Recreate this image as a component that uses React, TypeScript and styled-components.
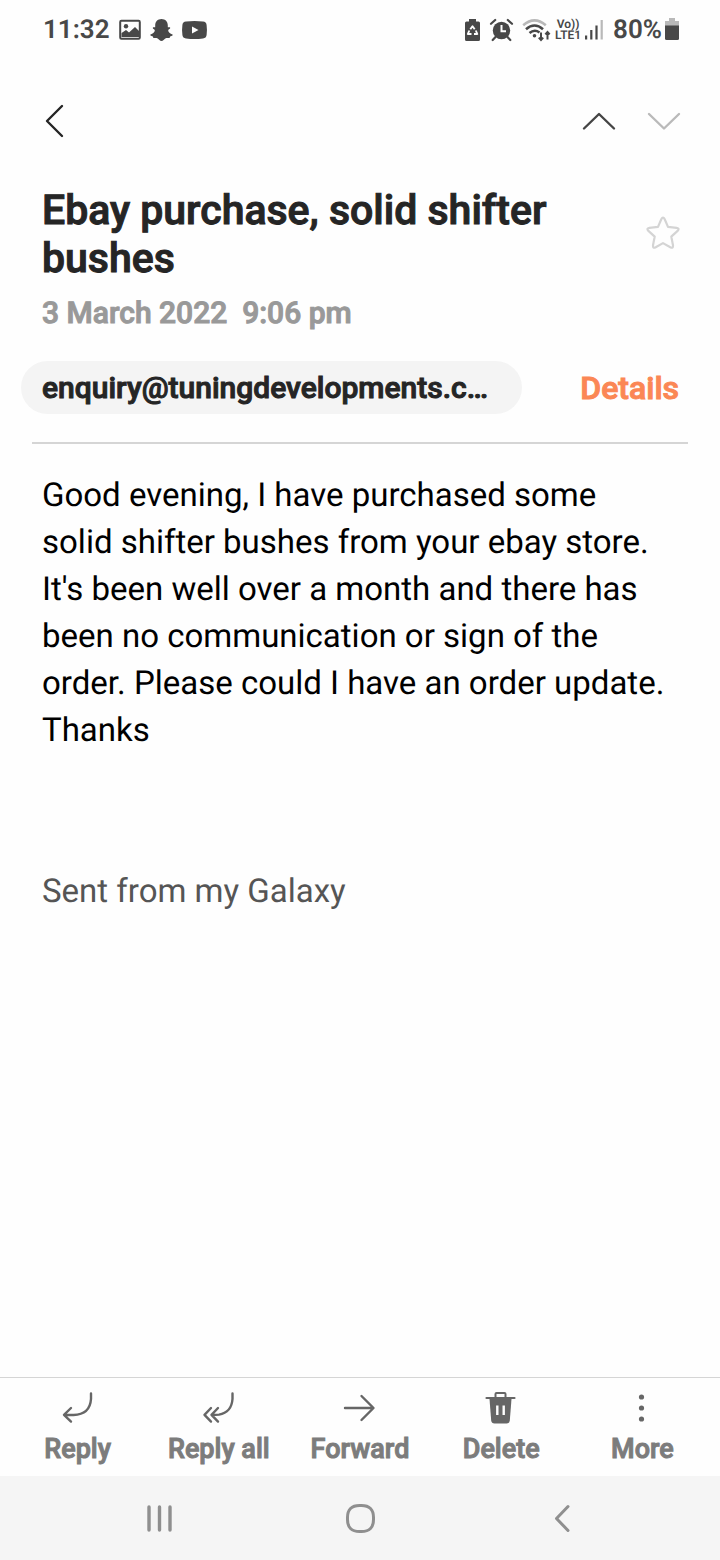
import React from "react";
import styled, { createGlobalStyle } from "styled-components";

const GlobalStyle = createGlobalStyle`
  * { box-sizing: border-box; }
  body {
    margin: 0;
    background: #fefefe;
    font-family: Roboto, "Liberation Sans", sans-serif;
    text-rendering: geometricPrecision;
  }
  button { border: 0; padding: 0; background: none; font: inherit; color: inherit; cursor: pointer; }
  h1, p { margin: 0; }
  svg { display: block; flex: none; overflow: visible; }
`;

const Screen = styled.div`
  display: flex;
  flex-direction: column;
  min-height: 100vh;
`;

const StatusBar = styled.div`
  display: flex;
  align-items: center;
  justify-content: space-between;
  height: 60px;
  padding: 0 41px 0 43px;
  color: #484848;
  font-size: 26px;
  font-weight: 600;
  line-height: 30px;
`;

const StatusGroup = styled.div<{ $gap: number }>`
  display: flex;
  align-items: center;
  gap: ${(p) => p.$gap}px;
`;

const NetworkLabel = styled.span`
  display: flex;
  flex-direction: column;
  align-items: center;
  width: 26px;
  font-size: 12px;
  line-height: 11px;
`;

const TopBar = styled.nav`
  display: flex;
  align-items: center;
  justify-content: space-between;
  height: 122px;
  padding: 0 38px 0 40px;
`;

const IconButton = styled.button<{ $color: string }>`
  display: flex;
  align-items: center;
  justify-content: center;
  color: ${(p) => p.$color};
`;

const Arrows = styled.div`
  display: flex;
  gap: 29px;
`;

const Header = styled.header`
  display: flex;
  flex-direction: column;
  padding: 5px 40px 0 42px;
`;

const TitleRow = styled.div`
  display: flex;
  align-items: center;
  justify-content: space-between;
  gap: 40px;
`;

const Title = styled.h1`
  color: #252525;
  font-size: 41px;
  font-weight: 500;
  line-height: 48px;
  -webkit-text-stroke: 1px currentColor;
`;

const DateLine = styled.p`
  margin-top: 13px;
  color: #999;
  font-size: 30px;
  font-weight: 500;
  line-height: 36px;
  white-space: pre;
  -webkit-text-stroke: 1px currentColor;
`;

const SenderRow = styled.div`
  display: flex;
  align-items: center;
  justify-content: space-between;
  margin: 29px 41px 0 21px;
  font-size: 30px;
  font-weight: 500;
  -webkit-text-stroke: 1px currentColor;
`;

const SenderChip = styled.button`
  height: 53px;
  padding: 0 34px 0 21px;
  border-radius: 27px;
  background: #f4f4f4;
  color: #252525;
`;

const DetailsButton = styled.button`
  color: #fb8755;
  font-size: 32px;
`;

const Divider = styled.hr`
  width: auto;
  height: 2px;
  margin: 28px 32px 0;
  border: 0;
  background: #d5d5d5;
`;

const Message = styled.main`
  flex: 1;
  padding: 28px 50px 40px 42px;
  color: #000;
  font-size: 33px;
  line-height: 47px;
`;

const Signature = styled.p`
  margin-top: 114px;
  color: #555;
`;

const Toolbar = styled.div`
  display: grid;
  grid-template-columns: repeat(5, 1fr);
  height: 99px;
  padding: 0 7px;
  border-top: 1px solid #d5d5d5;
`;

const Tool = styled.button`
  display: flex;
  flex-direction: column;
  align-items: center;
  gap: 10px;
  padding-top: 13px;
  color: #666;
`;

const ToolLabel = styled.span`
  color: #7c7c7c;
  font-size: 27px;
  font-weight: 500;
  line-height: 32px;
  -webkit-text-stroke: 1px currentColor;
`;

const SystemNav = styled.nav`
  display: grid;
  grid-template-columns: repeat(3, 1fr);
  height: 84px;
  padding: 0 58px;
  background: #f5f5f5;
`;

const line = {
  fill: "none",
  stroke: "currentColor",
  strokeLinecap: "round" as const,
  strokeLinejoin: "round" as const,
};

const PictureIcon = () => (
  <svg width="22" height="20" viewBox="0 0 22 20">
    <rect x="1.2" y=".7" width="19.6" height="18" rx="1.2" fill="none" stroke="currentColor" strokeWidth="2" />
    <circle cx="7" cy="6.300" r="2.2" fill="currentColor" />
    <path d="M2.5 16V13L7 10l3 2.500 6-5.500 4 4V17H2.500z" fill="currentColor" />
  </svg>
);

const GhostIcon = () => (
  <svg width="23" height="22" viewBox="0 0 23 22" fill="currentColor">
    <path d="M11.5 0C7.6 0 5.2 2.8 5.2 6.3v2c-.8.3-2-.5-2.4.4-.4 1 1.8 1.4 2 2.5.2 1.6-2 3.7-4.3 4.3-.8.4.2 1.5 2.4 1.9.4.6.1 1.5.9 1.6 1.3 0 2.5-.4 3.9.5 1.2.9 2.2 2.5 3.8 2.5s2.6-1.6 3.8-2.5c1.4-.9 2.6-.5 3.9-.5.8-.1.5-1 .9-1.6 2.2-.4 3.2-1.5 2.4-1.9-2.3-.6-4.5-2.7-4.3-4.3.2-1.1 2.4-1.5 2-2.5-.4-.9-1.6-.1-2.4-.4v-2C17.8 2.8 15.4 0 11.5 0z" />
  </svg>
);

const VideoIcon = () => (
  <svg width="25" height="18" viewBox="0 0 25 18">
    <path d="M4 .6Q12.5-.5 21 .6q3.3.3 3.6 3.4.7 5 0 10-.3 3.1-3.6 3.4-8.500 1.100-17 0Q.7 17.100.4 14q-.7-5 0-10Q.7.9 4 .6z" fill="currentColor" />
    <path d="M10 5.500v7l6.500-3.500z" fill="#fefefe" />
  </svg>
);

const RecycleBatteryIcon = () => (
  <svg width="15" height="22" viewBox="0 0 15 22">
    <path d="M4 0h7v2.5h2.5Q15 2.5 15 4v16.500q0 1.500-1.500 1.500h-12Q0 22 0 20.500V4q0-1.500 1.500-1.500H4z" fill="currentColor" />
    <path d="M5.300 10.200l2.200-3 2.200 3M10.800 11.500l1.500 3.500H9M4.300 11.500L2.800 15H6.500" fill="none" stroke="#fefefe" strokeWidth="1.9" strokeLinejoin="round" />
  </svg>
);

const AlarmIcon = () => (
  <svg width="23" height="22" viewBox="0 0 23 22">
    <circle cx="11.5" cy="11.5" r="8.7" fill="currentColor" />
    <path d="M1 4.800L5.200 1M22 4.800L17.800 1M5.500 18l-2.800 3M17.500 18l2.800 3" {...line} strokeWidth="2.2" />
    <path d="M11.500 6v6.200h4.500" fill="none" stroke="#fefefe" strokeWidth="2" />
  </svg>
);

const WifiIcon = () => (
  <svg width="28" height="22" viewBox="0 0 28 22">
    <path d="M.2 6.200Q11.500-3.600 22.800 6.200" fill="none" stroke="#b9b9b9" strokeWidth="2.6" />
    <path d="M3 10.200Q11.500 2.800 20 10.200M6.500 14Q11.500 9.800 16.500 13.500" fill="none" stroke="currentColor" strokeWidth="2.6" />
    <circle cx="11.5" cy="16.8" r="1.8" fill="currentColor" />
    <path d="M18 13.500V21M15.800 18.600l2.200 2.400 2.200-2.400M24.500 20.500V13M22.300 15.400l2.200-2.400 2.200 2.400" {...line} strokeLinecap="butt" strokeLinejoin="miter" strokeWidth="2" />
  </svg>
);

const SignalIcon = () => (
  <svg width="18" height="20" viewBox="0 0 18 20" fill="currentColor">
    <rect x="0" y="15.5" width="2.2" height="4" />
    <rect x="5.2" y="10" width="2.2" height="9.5" />
    <rect x="10.4" y="5.5" width="2.2" height="14" />
    <rect x="15.6" y="0" width="2.2" height="19.5" fill="#b9b9b9" />
  </svg>
);

const BatteryIcon = () => (
  <svg width="14" height="22" viewBox="0 0 14 22">
    <path d="M4-1h6v3h4v5H0V2h4z" fill="#b9b9b9" />
    <path d="M0 6.500h14v13q0 1.500-1.500 1.500h-11Q0 21 0 19.500z" fill="currentColor" />
  </svg>
);

const StarIcon = () => (
  <svg width="34" height="34" viewBox="0 2 34 34">
    <path d="M15.300 3.300q1.700-3.300 3.400 0l3.300 7.600 8.600.9q3.400.6 1 3.100l-6.300 5.700 1.700 8.700q.3 3.400-2.700 2L17 27.100l-7.300 4.200q-3 1.400-2.700-2l1.700-8.700L2.400 14.900q-2.400-2.500 1-3.100l8.600-.9z" {...line} strokeWidth="2.2" />
  </svg>
);

const ReplyIcon = () => (
  <svg width="30" height="32" viewBox="0 0 30 32">
    <path d="M28 2.500V8Q27 23.500 10.500 24H1.500M8 17L1 23.800l7 6.800" {...line} strokeWidth="2.4" />
  </svg>
);

const ReplyAllIcon = () => (
  <svg width="30" height="32" viewBox="0 0 30 32">
    <path d="M28.500 2.500V8Q27.500 21.500 15 23.600L8 24M14 17l-6.500 6.800 6.500 6.800M7 17L.5 23.800 7 30.600" {...line} strokeWidth="2.4" />
  </svg>
);

const ForwardIcon = () => (
  <svg width="32" height="32" viewBox="0 0 32 32">
    <path d="M1 17h28M17.500 5L29.500 17l-12 12" {...line} strokeWidth="2.4" />
  </svg>
);

const TrashIcon = () => (
  <svg width="30" height="32" viewBox="0 0 30 32">
    <path d="M9.500 6.500V3q0-1 1-1h8q1 0 1 1v3.500" fill="none" stroke="currentColor" strokeWidth="2" />
    <path d="M.5 7h28" {...line} strokeWidth="2.2" />
    <path d="M3.500 8h22l-1.700 21.500q-.3 3-3.300 3h-12q-3 0-3.300-3z" fill="currentColor" />
    <path d="M11.300 14.500v9.500M17.700 14.500v9.500" fill="none" stroke="#fefefe" strokeWidth="2.4" />
  </svg>
);

const MoreIcon = () => (
  <svg width="6" height="32" viewBox="0 0 6 32" fill="currentColor">
    <circle cx="2.500" cy="6" r="2.600" />
    <circle cx="2.500" cy="17" r="2.600" />
    <circle cx="2.500" cy="28" r="2.600" />
  </svg>
);

const tools = [
  { label: "Reply", Icon: ReplyIcon },
  { label: "Reply all", Icon: ReplyAllIcon },
  { label: "Forward", Icon: ForwardIcon },
  { label: "Delete", Icon: TrashIcon },
  { label: "More", Icon: MoreIcon },
];

export default function App() {
  return (
    <Screen>
      <GlobalStyle />
      <StatusBar>
        <StatusGroup $gap={9}>
          <span>11:32</span>
          <PictureIcon />
          <GhostIcon />
          <VideoIcon />
        </StatusGroup>
        <StatusGroup $gap={10}>
          <StatusGroup $gap={10}>
            <RecycleBatteryIcon />
            <AlarmIcon />
            <StatusGroup $gap={4}>
              <WifiIcon />
              <NetworkLabel>
                <span>Vo))</span>
                <span>LTE1</span>
              </NetworkLabel>
              <SignalIcon />
            </StatusGroup>
          </StatusGroup>
          <StatusGroup $gap={3}>
            <span>80%</span>
            <BatteryIcon />
          </StatusGroup>
        </StatusGroup>
      </StatusBar>

      <TopBar>
        <IconButton $color="#252525" aria-label="Back">
          <svg width="30" height="34" viewBox="0 0 30 34">
            <path d="M22 2L7 17l15 15" {...line} strokeWidth="2.4" />
          </svg>
        </IconButton>
        <Arrows>
          <IconButton $color="#454545" aria-label="Previous message">
            <svg width="36" height="34" viewBox="0 0 36 34">
              <path d="M3 24.500L18 10 33 24.500" {...line} strokeWidth="2.4" />
            </svg>
          </IconButton>
          <IconButton $color="#bababa" aria-label="Next message">
            <svg width="36" height="34" viewBox="0 0 36 34">
              <path d="M3 10L18 24.500 33 10" {...line} strokeWidth="2.4" />
            </svg>
          </IconButton>
        </Arrows>
      </TopBar>

      <Header>
        <TitleRow>
          <Title>Ebay purchase, solid shifter bushes</Title>
          <IconButton $color="#d4d4d4" aria-label="Add star">
            <StarIcon />
          </IconButton>
        </TitleRow>
        <DateLine>{"3 March 2022  9:06 pm"}</DateLine>
      </Header>

      <SenderRow>
        <SenderChip>enquiry@tuningdevelopments.c…</SenderChip>
        <DetailsButton>Details</DetailsButton>
      </SenderRow>
      <Divider />

      <Message>
        <p>
          Good evening, I have purchased some solid shifter bushes from your ebay store. It's been well over a
          month and there has been no communication or sign of the order. Please could I have an order update.
          Thanks
        </p>
        <Signature>Sent from my Galaxy</Signature>
      </Message>

      <Toolbar role="toolbar" aria-label="Message actions">
        {tools.map(({ label, Icon }) => (
          <Tool key={label}>
            <Icon />
            <ToolLabel>{label}</ToolLabel>
          </Tool>
        ))}
      </Toolbar>

      <SystemNav aria-label="System navigation">
        <IconButton $color="#8f8f8f" aria-label="Recent apps">
          <svg width="26" height="30" viewBox="0 0 26 30">
            <path d="M3 4v23M13.500 4v23M24 4v23" {...line} strokeWidth="3.4" />
          </svg>
        </IconButton>
        <IconButton $color="#8f8f8f" aria-label="Home">
          <svg width="30" height="30" viewBox="0 0 30 30">
            <path d="M15.500 2.500Q29 2 28.500 15.500 29 29 15.500 28.500 2 29 2.500 15.500 2 2 15.500 2.500z" {...line} strokeWidth="3" />
          </svg>
        </IconButton>
        <IconButton $color="#8f8f8f" aria-label="Back to previous screen">
          <svg width="16" height="30" viewBox="0 0 16 30">
            <path d="M15 3.500L3.500 15.500l11.500 12" {...line} strokeWidth="3" />
          </svg>
        </IconButton>
      </SystemNav>
    </Screen>
  );
}
